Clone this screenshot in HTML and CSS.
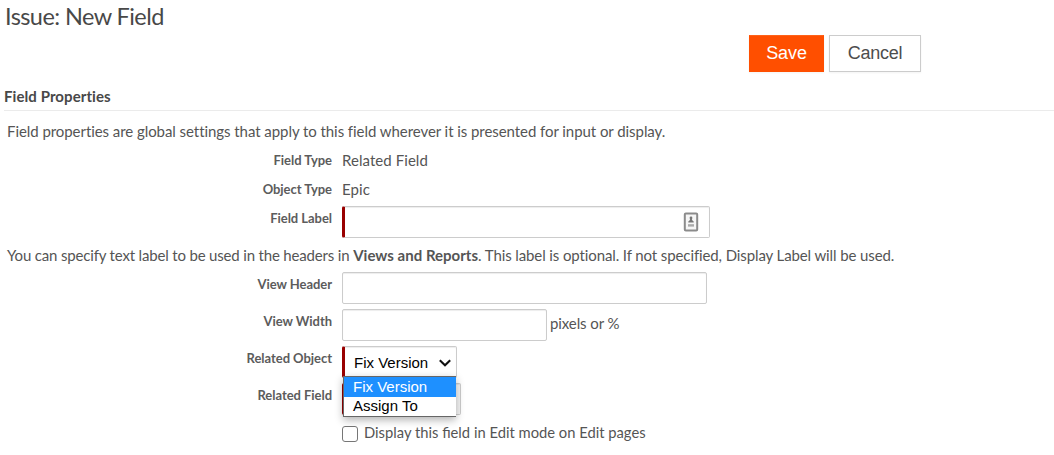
FILE: index.html
```html
<!DOCTYPE html>
<html lang="en">
<head>
<meta charset="utf-8">
<title>Issue: New Field</title>
<link rel="stylesheet" href="styles.css">
</head>
<body>
<h1 class="title">Issue: New Field</h1>
<div class="actions">
  <button class="btn btn-primary" type="button">Save</button>
  <button class="btn" type="button">Cancel</button>
</div>
<h2 class="section">Field Properties</h2>
<p class="note">Field properties are global settings that apply to this field wherever it is presented for input or display.</p>
<div class="row plain"><span class="label">Field Type</span><span class="value">Related Field</span></div>
<div class="row plain"><span class="label">Object Type</span><span class="value">Epic</span></div>
<div class="row">
  <span class="label">Field Label</span>
  <div class="input required field-label">
    <svg class="card" width="16" height="20" viewBox="0 0 16 20">
      <rect x="1.8" y="1.5" width="12.4" height="17" rx="1" fill="#f6f6f6" stroke="#8b8b8b" stroke-width="2"/>
      <circle cx="8" cy="6" r="1.4" fill="#777"/>
      <path d="M5.3 10.4V9.4Q6.8 8.6 7.2 7H8.8Q9.2 8.6 10.7 9.4V10.4Z" fill="#777"/>
      <path d="M5 13.4H11" stroke="#aaa" stroke-width="2.4"/>
    </svg>
  </div>
</div>
<p class="note note-label"><span class="lead">You can specify text label to be used in the headers in </span><b>Views and Reports</b>. This label is optional. If not specified, Display Label will be used.</p>
<div class="row"><span class="label">View Header</span><div class="input view-header"></div></div>
<div class="row"><span class="label">View Width</span><div class="input view-width"></div><span class="suffix">pixels or %</span></div>
<div class="row">
  <span class="label">Related Object</span>
  <div class="input required select">
    <span>Fix Version</span>
    <svg class="chevron" width="14" height="10" viewBox="0 0 14 10"><path d="M1.8 2.2L7 7.3L12.2 2.2" fill="none" stroke="#111" stroke-width="2.1"/></svg>
    <div class="menu">
      <div class="option selected">Fix Version</div>
      <div class="option">Assign To</div>
    </div>
  </div>
</div>
<div class="row"><span class="label">Related Field</span><div class="input required related-field"></div></div>
<div class="check"><span class="box"></span><span class="check-text">Display this field in Edit mode on Edit pages</span></div>
</body>
</html>
```
FILE: styles.css
```css
* { box-sizing: border-box; }
body {
  margin: 0;
  height: 455px;
  overflow: hidden;
  background: #fff;
  color: #555;
  font: 15px/20px Lato, sans-serif;
}
.title {
  margin: 0;
  height: 35px;
  padding-left: 5px;
  font-size: 23.5px;
  line-height: 33px;
  font-weight: 400;
  letter-spacing: -.57px;
  color: #484848;
}
.actions { display: flex; gap: 5px; padding-left: 749px; height: 37px; }
.btn {
  width: 92px;
  height: 37px;
  padding: 0;
  border: 1px solid #ccc;
  background: #fff;
  color: #4d4d4d;
  font: 18px/35px "Liberation Sans", Arial, sans-serif;
  letter-spacing: -.25px;
  box-shadow: 0 1px 2px rgba(0, 0, 0, .05);
}
.btn-primary {
  width: 75px;
  border-color: #ff6219 #ff4f00 #ff4f00;
  background: #ff4f00;
  color: #fff;
  letter-spacing: -.1px;
}
.section {
  margin: 14px 0 0 4px;
  height: 25px;
  border-bottom: 1px solid #ebebeb;
  font-size: 15px;
  line-height: 20px;
  font-weight: 700;
  letter-spacing: .08px;
  color: #484848;
}
.note { margin: 10px 0 9px 7px; white-space: nowrap; letter-spacing: -.06px; }
.row { display: flex; height: 32px; margin-bottom: 5px; }
.plain { height: 20px; margin-bottom: 9px; }
.plain + .row:not(.plain) { margin-top: -2px; }
.value { letter-spacing: .06px; }
.label {
  width: 332px;
  margin-right: 10px;
  padding-top: 2px;
  flex: none;
  text-align: right;
  font-size: 13px;
  font-weight: 700;
  letter-spacing: -.04px;
  color: #5c5c5c;
}
.plain .label { padding-top: 0; }
.input {
  height: 32px;
  border: 1px solid #ccc;
  border-radius: 2px;
  background: #fff;
  box-shadow: inset 0 1px 1px rgba(0, 0, 0, .075);
}
.required { border-left: 3px solid #900; }
.field-label { display: flex; justify-content: flex-end; align-items: center; width: 368px; padding-right: 10px; }
.note-label { margin: 7px 0 7px 7px; letter-spacing: -.11px; }
.lead { letter-spacing: -.17px; }
.note-label b { letter-spacing: .02px; }
.view-header { width: 365px; }
.view-width { width: 205px; }
.suffix { margin: 4px 0 0 3px; letter-spacing: -.1px; }
.select {
  position: relative;
  display: flex;
  align-items: center;
  justify-content: space-between;
  width: 115px;
  padding: 1px 4px 0 9px;
  color: #000;
  font: 15px/20px "Liberation Sans", Arial, sans-serif;
}
.menu {
  position: absolute;
  z-index: 1;
  left: -2px;
  top: 29px;
  width: 113px;
  height: 41px;
  border: 1px solid #666;
  border-right: 0;
  background: #fff;
  box-shadow: 0 3px 8px rgba(0, 0, 0, .3);
}
.option { height: 20px; padding-left: 9px; line-height: 17px; }
.selected { background: #1e90ff; color: #fff; line-height: 19px; }
.related-field { width: 119px; background: #f5f5f5; }
.check { display: flex; align-items: center; gap: 6px; margin: 7px 0 0 342px; }
.check-text { font-size: 14.75px; }
.box { width: 16px; height: 16px; margin-top: 3px; border: 1px solid #767676; border-radius: 3px; }
```
